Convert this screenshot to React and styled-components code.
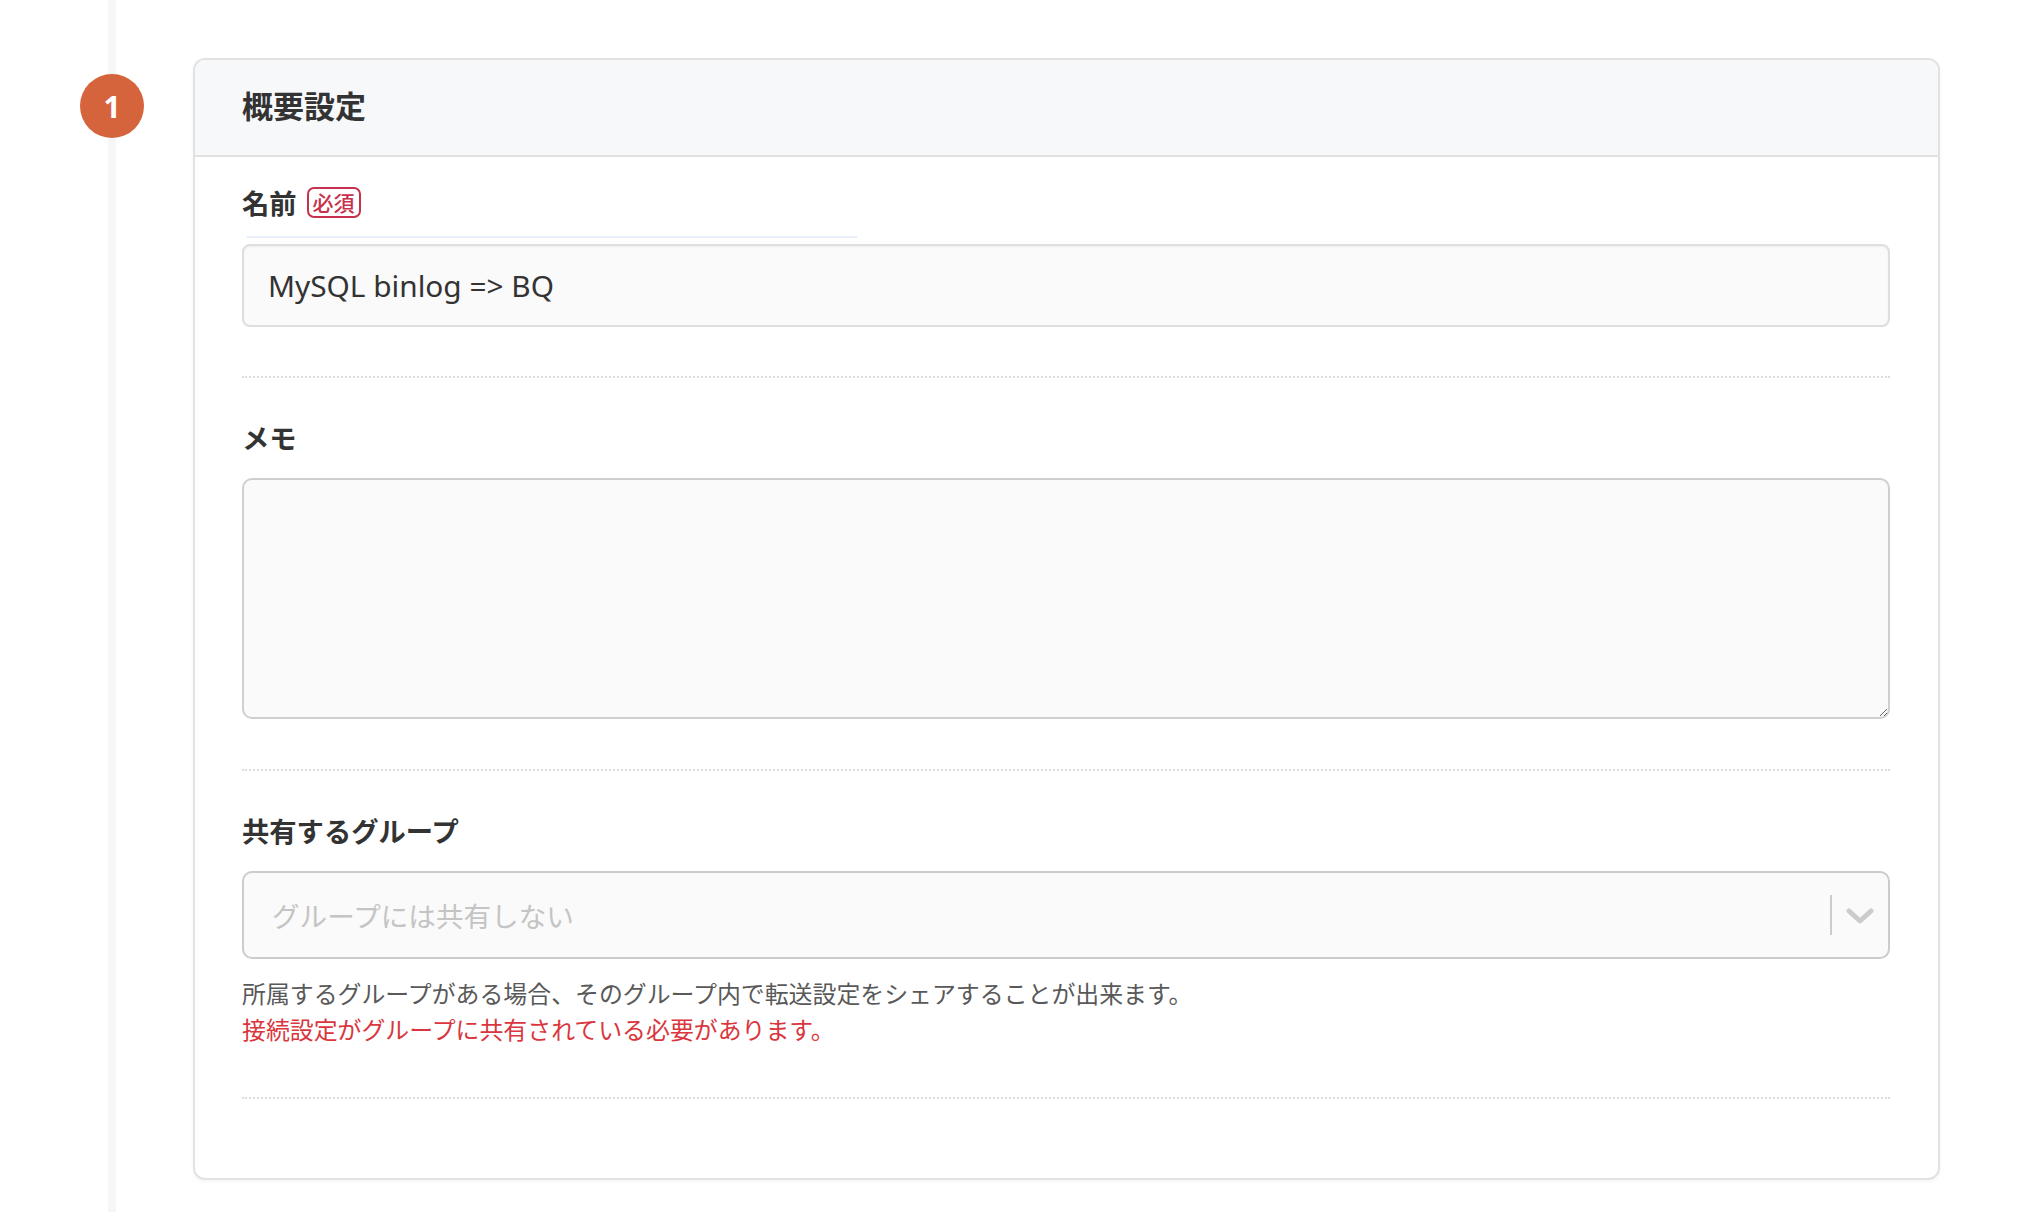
import React from 'react';
import styled, { createGlobalStyle } from 'styled-components';

const GlobalStyle = createGlobalStyle`
  html, body {
    margin: 0;
    padding: 0;
    background: #ffffff;
  }
  body {
    font-family: "Noto Sans CJK JP", "Noto Sans", sans-serif;
    color: #333333;
  }
  * {
    box-sizing: border-box;
  }
`;

const Page = styled.div`
  display: flex;
  min-height: 100vh;
  padding-right: 90px;
`;

const Rail = styled.div`
  flex: 0 0 193px;
  background: linear-gradient(
    to right,
    transparent 108px,
    #f6f6f6 108px,
    #f6f6f6 116px,
    transparent 116px
  );
`;

const StepBadge = styled.div`
  width: 64px;
  height: 64px;
  margin: 74px 0 0 80px;
  border-radius: 50%;
  background: #d5633c;
  color: #ffffff;
  display: flex;
  align-items: center;
  justify-content: center;
  font-family: "Noto Sans", sans-serif;
  font-size: 30px;
  font-weight: 700;
`;

const Card = styled.section`
  flex: 1;
  align-self: flex-start;
  margin-top: 58px;
  border: 2px solid #e2e2e2;
  border-radius: 12px;
  background: #ffffff;
  box-shadow: 0 2px 4px rgba(0, 0, 0, 0.04);
  overflow: hidden;
`;

const CardHeader = styled.header`
  height: 97px;
  display: flex;
  align-items: center;
  padding: 0 47px 6px;
  background: #f7f8fa;
  border-bottom: 2px solid #e2e2e2;
`;

const CardTitle = styled.h2`
  margin: 0;
  font-size: 31px;
  font-weight: 700;
  color: #333333;
`;

const CardBody = styled.div`
  padding: 0 48px 79px 47px;
`;

const Group = styled.div`
  padding-top: ${(p) => p.$top}px;
  padding-bottom: ${(p) => p.$bottom}px;
  border-bottom: 2px dotted #dddddd;
`;

const LabelRow = styled.div`
  display: flex;
  align-items: center;
  gap: 10px;
  height: 40px;
  padding-bottom: 4px;
  margin-bottom: ${(p) => p.$gap || 0}px;
`;

const Label = styled.label`
  font-size: 27.3px;
  font-weight: 700;
  color: #333333;
`;

const Required = styled.span`
  display: inline-flex;
  align-items: center;
  justify-content: center;
  height: 31px;
  padding: 0 4px;
  border: 2px solid #c7314d;
  border-radius: 7px;
  color: #c7314d;
  font-size: 21px;
  font-weight: 500;
  line-height: 1;
`;

const FocusTrace = styled.div`
  width: 610px;
  height: 2px;
  margin: 12px 0 6px 5px;
  background: #e9eff8;
`;

const TextInput = styled.input`
  display: block;
  width: 100%;
  height: 83px;
  padding: 0 24px;
  border: 2px solid #dedede;
  border-radius: 8px;
  background: #fafafa;
  box-shadow: inset 0 1px 2px rgba(0, 0, 0, 0.05);
  font-family: "Noto Sans", "Noto Sans CJK JP", sans-serif;
  font-size: 29.8px;
  color: #333333;
  outline: none;
`;

const Memo = styled.textarea`
  display: block;
  width: 100%;
  height: 241px;
  padding: 20px 24px;
  border: 2px solid #cfcfcf;
  border-radius: 10px;
  background: #fafafa;
  font-family: "Noto Sans CJK JP", sans-serif;
  font-size: 28.6px;
  color: #333333;
  outline: none;
  resize: vertical;
`;

const SelectBox = styled.div`
  display: flex;
  align-items: center;
  height: 88px;
  padding-left: 28px;
  border: 2px solid #cccccc;
  border-radius: 10px;
  background: #fafafa;
`;

const Placeholder = styled.span`
  flex: 1;
  font-size: 27.6px;
  color: #c4c4c4;
`;

const Indicator = styled.div`
  display: flex;
  align-items: center;
  height: 100%;
`;

const Divider = styled.span`
  width: 2px;
  height: 40px;
  background: #cccccc;
`;

const ChevronWrap = styled.span`
  display: flex;
  align-items: center;
  justify-content: center;
  width: 56px;
  height: 100%;
  padding-top: 2px;
  color: #cccccc;
`;

const Help = styled.div`
  margin-top: 16px;
  font-size: 23.9px;
  line-height: 36px;
`;

const HelpLine = styled.p`
  margin: 0;
  color: ${(p) => (p.$error ? '#d9363e' : '#595959')};
`;

const Chevron = () => (
  <svg width="28" height="18" viewBox="0 0 28 18" fill="none">
    <polyline
      points="3,4 14,14 25,4"
      stroke="currentColor"
      strokeWidth="5"
      strokeLinecap="round"
      strokeLinejoin="round"
    />
  </svg>
);

const App = () => {
  return (
    <>
      <GlobalStyle />
      <Page>
        <Rail>
          <StepBadge>1</StepBadge>
        </Rail>
        <Card>
          <CardHeader>
            <CardTitle>概要設定</CardTitle>
          </CardHeader>
          <CardBody>
            <Group $top={27} $bottom={49}>
              <LabelRow>
                <Label>名前</Label>
                <Required>必須</Required>
              </LabelRow>
              <FocusTrace />
              <TextInput defaultValue="MySQL binlog => BQ" />
            </Group>
            <Group $top={41} $bottom={50}>
              <LabelRow $gap={19}>
                <Label>メモ</Label>
              </LabelRow>
              <Memo />
            </Group>
            <Group $top={41} $bottom={50}>
              <LabelRow $gap={19}>
                <Label>共有するグループ</Label>
              </LabelRow>
              <SelectBox>
                <Placeholder>グループには共有しない</Placeholder>
                <Indicator>
                  <Divider />
                  <ChevronWrap>
                    <Chevron />
                  </ChevronWrap>
                </Indicator>
              </SelectBox>
              <Help>
                <HelpLine>
                  所属するグループがある場合、そのグループ内で転送設定をシェアすることが出来ます。
                </HelpLine>
                <HelpLine $error>接続設定がグループに共有されている必要があります。</HelpLine>
              </Help>
            </Group>
          </CardBody>
        </Card>
      </Page>
    </>
  );
};

export default App;
